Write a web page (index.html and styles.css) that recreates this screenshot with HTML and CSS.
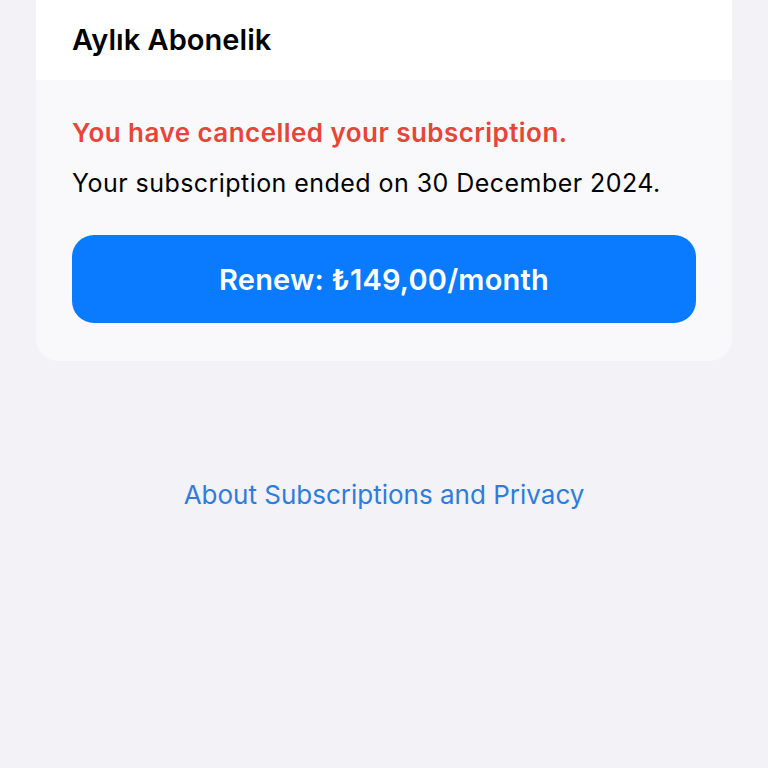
FILE: index.html
```html
<!DOCTYPE html>
<html>
<head>
<meta charset="utf-8">
<link rel="stylesheet" href="styles.css">
</head>
<body>
<div class="page">
  <div class="card">
    <div class="card-header">Aylık Abonelik</div>
    <div class="card-body">
      <div class="status">You have cancelled your subscription.</div>
      <div class="ended">Your subscription ended on 30 December 2024.</div>
      <button class="renew">Renew: ₺149,00/month</button>
    </div>
  </div>
  <div class="link-row"><a class="about">About Subscriptions and Privacy</a></div>
</div>
</body>
</html>
```
FILE: styles.css
```css
html, body {
  margin: 0;
  padding: 0;
  background: #f2f2f7;
  font-family: Inter, "Noto Sans", "Liberation Sans", sans-serif;
}
.page {
  width: 768px;
  height: 768px;
  padding: 0 36px;
  box-sizing: border-box;
  overflow: hidden;
}
.card {
  background: #f9f9fb;
  border-radius: 0 0 22px 22px;
  overflow: hidden;
}
.card-header {
  background: #ffffff;
  height: 80px;
  box-sizing: border-box;
  padding: 20px 36px 0;
  font-size: 29px;
  font-weight: 600;
  letter-spacing: 0.05px;
  color: #000;
  line-height: 40px;
}
.card-body {
  padding: 34px 36px 38px;
  display: flex;
  flex-direction: column;
}
.status {
  color: #e8443a;
  font-size: 26px;
  font-weight: 600;
  letter-spacing: 0.45px;
  line-height: 38px;
}
.ended {
  color: #000;
  font-size: 25px;
  font-weight: 400;
  letter-spacing: 0.45px;
  line-height: 38px;
  margin-top: 12px;
}
.renew {
  margin-top: 33px;
  height: 88px;
  border: none;
  border-radius: 22px;
  background: #0a7aff;
  color: #fff;
  font-family: inherit;
  font-size: 29px;
  font-weight: 600;
  letter-spacing: 0.2px;
  padding: 0;
}
.link-row {
  margin-top: 114px;
  text-align: center;
  line-height: 40px;
}
.about {
  color: #2f7ddb;
  font-size: 26px;
}
```
